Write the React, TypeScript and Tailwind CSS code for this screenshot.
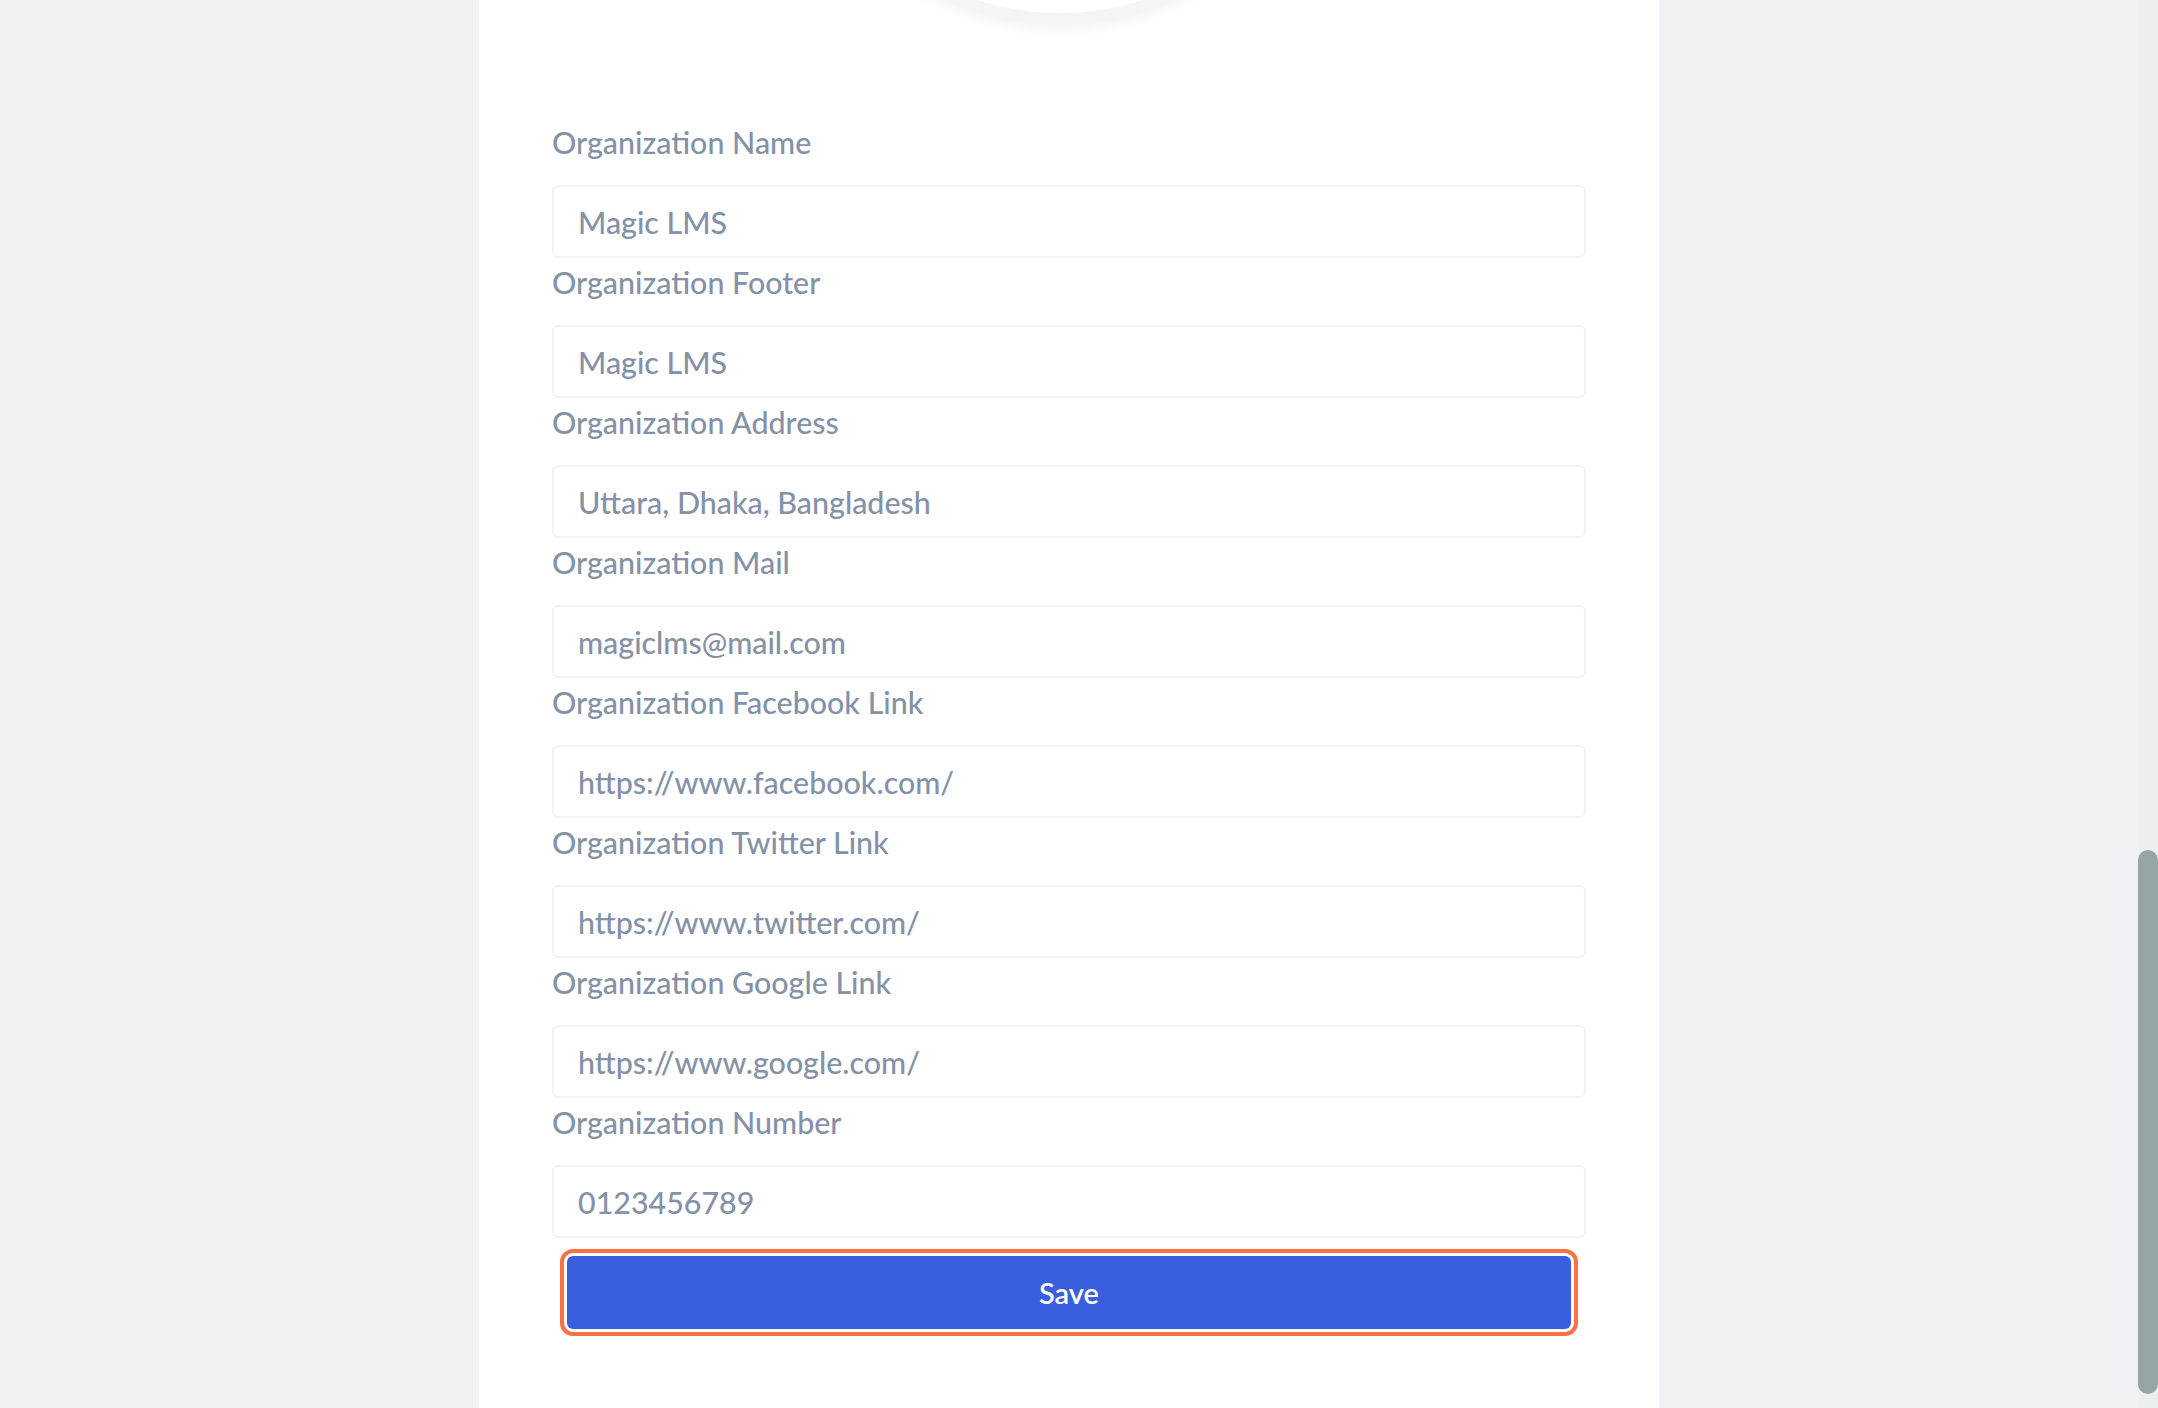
import React from "react";

const fields = [
  { label: "Organization Name", value: "Magic LMS" },
  { label: "Organization Footer", value: "Magic LMS" },
  { label: "Organization Address", value: "Uttara, Dhaka, Bangladesh" },
  { label: "Organization Mail", value: "magiclms@mail.com" },
  { label: "Organization Facebook Link", value: "https://www.facebook.com/" },
  { label: "Organization Twitter Link", value: "https://www.twitter.com/" },
  { label: "Organization Google Link", value: "https://www.google.com/" },
  { label: "Organization Number", value: "0123456789" },
];

export default function App() {
  return (
    <div className="flex h-[1408px] w-full overflow-hidden bg-[#f0f2f6] font-['Lato',sans-serif]">
      {/* Page */}
      <div className="flex flex-1 justify-center">
        <div className="flex w-[1180px] flex-col bg-white px-[73px]">
          {/* Logo circle (scrolled mostly out of view) */}
          <div className="ml-[228px] mt-[-535px] h-[560px] w-[560px] shrink-0 rounded-full border-[12px] border-[#f5f5f5] bg-white shadow-[0_4px_12px_rgba(0,0,0,0.05)]" />

          <form className="mt-[93px] flex flex-col" onSubmit={(e) => e.preventDefault()}>
            {fields.map((field) => (
              <div key={field.label} className="flex flex-col">
                <label className="mb-[28px] mt-[9px] block text-[30.4px] font-medium leading-[30px] text-[#8491a7]">
                  {field.label}
                </label>
                <input
                  readOnly
                  value={field.value}
                  className="block h-[73px] w-full rounded-md border-2 border-[#f3f3f4] bg-white px-[24px] font-['Lato',sans-serif] text-[30.4px] font-medium text-[#8491a7] outline-none"
                />
              </div>
            ))}

            <div className="mx-[15px] mt-[18px]">
              <button
                type="submit"
                className="h-[73px] w-full rounded-md bg-[#3a5fde] text-[29px] font-semibold text-white outline-4 outline-offset-[3px] outline-[#ff7043] outline-solid"
              >
                Save
              </button>
            </div>
          </form>
        </div>
      </div>

      {/* Scrollbar */}
      <div className="w-[20px] bg-[#eceff0] pt-[850px]">
        <div className="h-[544px] w-full rounded-full bg-[#95a5a6]" />
      </div>
    </div>
  );
}
